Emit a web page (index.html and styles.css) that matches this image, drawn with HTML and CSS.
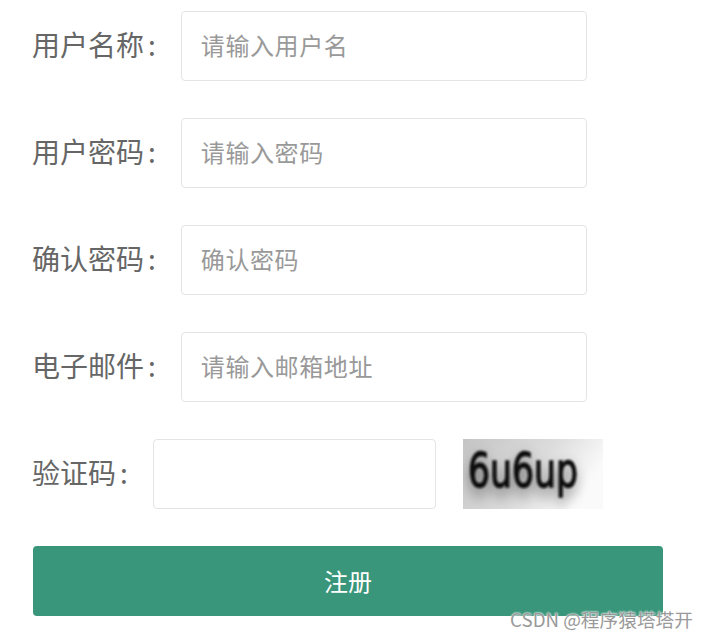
FILE: index.html
```html
<!DOCTYPE html>
<html lang="zh-CN">

<head>
    <meta charset="UTF-8">
    <title>注册</title>
    <link rel="stylesheet" href="styles.css">
</head>

<body>
    <form class="register">
        <div class="field">
            <label class="field__label">用户名称<span class="field__colon">:</span></label>
            <input class="field__input" type="text" placeholder="请输入用户名">
        </div>
        <div class="field">
            <label class="field__label">用户密码<span class="field__colon">:</span></label>
            <input class="field__input" type="text" placeholder="请输入密码">
        </div>
        <div class="field">
            <label class="field__label">确认密码<span class="field__colon">:</span></label>
            <input class="field__input" type="text" placeholder="确认密码">
        </div>
        <div class="field">
            <label class="field__label">电子邮件<span class="field__colon">:</span></label>
            <input class="field__input" type="text" placeholder="请输入邮箱地址">
        </div>
        <div class="field">
            <label class="field__label">验证码<span class="field__colon">:</span></label>
            <input class="field__input field__input--code" type="text">
            <svg class="captcha" width="140" height="70" viewBox="0 0 140 70">
                <defs>
                    <linearGradient id="captchaBg" x1="0" y1="0" x2="1" y2="0.35">
                        <stop offset="0" stop-color="#c4c4c4" />
                        <stop offset="0.6" stop-color="#dcdcdc" />
                        <stop offset="1" stop-color="#fafafa" />
                    </linearGradient>
                    <filter id="captchaBlur" x="-20%" y="-50%" width="140%" height="200%">
                        <feGaussianBlur in="SourceGraphic" stdDeviation="0.8" result="soft" />
                        <feOffset in="SourceAlpha" dy="6" result="moved" />
                        <feGaussianBlur in="moved" stdDeviation="6" result="blurred" />
                        <feComponentTransfer in="blurred" result="shade">
                            <feFuncA type="linear" slope="0.5" />
                        </feComponentTransfer>
                        <feMerge>
                            <feMergeNode in="shade" />
                            <feMergeNode in="soft" />
                        </feMerge>
                    </filter>
                </defs>
                <rect width="140" height="70" fill="url(#captchaBg)" />
                <text class="captcha__text" transform="translate(5 48) scale(1 1.2)" textLength="110" lengthAdjust="spacingAndGlyphs" filter="url(#captchaBlur)">6u6up</text>
            </svg>
        </div>
        <button class="submit" type="button">注册</button>
    </form>
    <div class="watermark">CSDN @程序猿塔塔开</div>
</body>

</html>
```

FILE: styles.css
```css
html {
    box-sizing: border-box;
}

*,
*:before,
*:after {
    box-sizing: inherit;
}

body {
    margin: 0;
    padding: 11px 0 0 33px;
    min-height: 100vh;
    position: relative;
    background: #fff;
    overflow: hidden;
    font-family: "Noto Sans CJK SC", "Noto Sans", sans-serif;
}

.register {
    width: 630px;
}

.field {
    display: flex;
    align-items: center;
    height: 70px;
    margin-bottom: 37px;
}

.field__label {
    font-size: 28px;
    color: #666;
    margin-left: -1px;
    margin-right: 25px;
    padding-bottom: 4px;
    white-space: nowrap;
}

.field__colon {
    margin-left: 4px;
}

.field__input {
    width: 406px;
    height: 70px;
    padding: 0 19px 4px;
    border: 1px solid #e4e4e4;
    border-radius: 4px;
    outline: 0;
    background: #fff;
    font-family: inherit;
    font-size: 24px;
    letter-spacing: 0.6px;
    color: #666;
}

.field__input::placeholder {
    color: #999;
}

.field__input--code {
    width: 283px;
}

.captcha {
    display: block;
    margin-left: 27px;
}

.captcha__text {
    font-family: "DejaVu Sans", sans-serif;
    font-size: 40px;
    fill: #0c0c0c;
    stroke: #0c0c0c;
    stroke-width: 1.2;
}

.submit {
    display: block;
    width: 630px;
    height: 70px;
    padding: 0 0 2px;
    border: 0;
    border-radius: 4px;
    background: #39967a;
    color: #fff;
    font-family: inherit;
    font-size: 24px;
    cursor: pointer;
}

.watermark {
    position: absolute;
    right: 14px;
    top: 605px;
    font-size: 18.7px;
    color: #999;
    text-shadow: 0 0 2px #fff, 0 0 2px #fff;
    white-space: nowrap;
}
```
